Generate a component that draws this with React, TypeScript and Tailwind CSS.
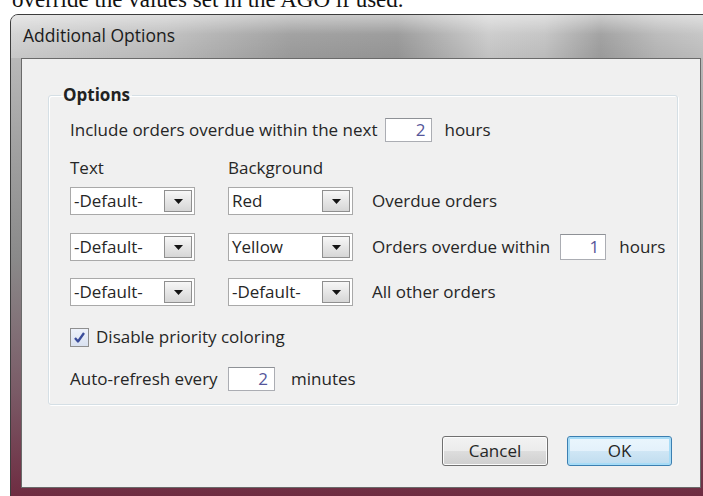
import React from "react";

function Combo({ value, width }: { value: string; width: string }) {
  return (
    <div className={`flex h-[28px] ${width} shrink-0 items-stretch border border-[#a9a9a9] bg-white`}>
      <span className="flex flex-1 items-center pl-[3px]">{value}</span>
      <span className="my-[2px] mr-[2px] flex w-[28px] items-center justify-center border border-[#8f8f8f] bg-[linear-gradient(to_bottom,#f7f7f7,#e6e6e6_50%,#d6d6d6)]">
        <svg width="9" height="5" viewBox="0 0 9 5">
          <path d="M0 0h9L4.5 5z" fill="#141414" />
        </svg>
      </span>
    </div>
  );
}

function NumField({ value, width, height }: { value: string; width: string; height: string }) {
  return (
    <div
      className={`flex ${width} ${height} shrink-0 items-center justify-end border border-[#abadb3] border-t-[#8e9196] bg-white pr-[6px] text-[#55569a]`}
    >
      {value}
    </div>
  );
}

function Checkbox() {
  return (
    <span className="flex h-[19px] w-[19px] shrink-0 items-center justify-center border border-[#8f8f8f] bg-[linear-gradient(to_bottom,#eef2fa,#d9e1f0)]">
      <svg width="13" height="13" viewBox="0 0 13 13">
        <path d="M2 7 L5 10.5 L11 2" fill="none" stroke="#3a4c9a" strokeWidth="2.3" strokeLinejoin="round" />
      </svg>
    </span>
  );
}

function DialogButton({ label, primary }: { label: string; primary?: boolean }) {
  return (
    <div
      className={
        primary
          ? "flex h-[30px] w-[105px] items-center justify-center rounded-[3px] border border-[#3c7fb1] bg-[linear-gradient(to_bottom,#eaf6fd,#e3f1fb_50%,#cfe6f5_51%,#bfdcef)] shadow-[inset_0_0_0_2px_#a7dcf7]"
          : "flex h-[30px] w-[106px] items-center justify-center rounded-[3px] border border-[#707070] bg-[linear-gradient(to_bottom,#f2f2f2,#ebebeb_50%,#dddddd_51%,#cfcfcf)] shadow-[inset_0_0_0_1px_#fcfcfc]"
      }
    >
      {label}
    </div>
  );
}

export default function App() {
  return (
    <div className="h-[496px] w-[703px] overflow-hidden bg-white font-['Open_Sans','Noto_Sans',sans-serif] text-[17px] text-[#262626]">
      {/* last line of the page text above the dialog */}
      <div className="h-[14px] overflow-hidden pl-[12px]">
        <p className="-mt-[12px] whitespace-nowrap font-['Liberation_Serif',serif] text-[23px] leading-none text-[#111]">
          override the values set in the AGO if used.
        </p>
      </div>

      {/* window frame */}
      <div className="ml-[10px] w-[704px] rounded-tl-[8px] border border-[#3d3d3d] bg-[linear-gradient(to_bottom,#c4c4c4_0%,#a4a4a4_25%,#8a8a8a_50%,#7a5a66_78%,#6e2a40_100%)] pb-[12px]">
        <div className="flex h-[43px] items-center rounded-tl-[7px] bg-[linear-gradient(to_bottom,rgba(255,255,255,0.45),rgba(255,255,255,0)_45%,rgba(0,0,0,0.06)),linear-gradient(to_right,#d4d4d4_0%,#c2c2c2_22%,#a2a2a2_40%,#9d9d9d_55%,#cdcdcd_68%,#c6c6c6_76%,#a3a3a3_84%,#bcbcbc_92%,#c9c9c9_100%)] pb-[2px] pl-[12px] text-[17.5px] text-[#1b1b1b]">
          Additional Options
        </div>

        {/* client area */}
        <div className="ml-[10px] h-[430px] w-[680px] border border-[#6a6a6a] bg-[#f0f0f0]">
          <fieldset className="ml-[26px] mt-[26px] w-[630px] min-w-0 whitespace-nowrap rounded-[3px] border border-[#d5dfe5] px-[21px] pb-[13px] pt-[13px] shadow-[inset_1px_1px_0_#ffffff,1px_1px_0_#ffffff]">
            <legend className="-ml-[9px] px-[2px] font-bold leading-[20px] text-[#222]">Options</legend>

            <div className="flex h-[24px] items-center">
              <span>Include orders overdue within the next</span>
              <span className="ml-[8px]">
                <NumField value="2" width="w-[47px]" height="h-[24px]" />
              </span>
              <span className="ml-[12px]">hours</span>
            </div>

            <div className="mt-[16px] flex h-[20px] items-center">
              <span className="w-[158px] shrink-0">Text</span>
              <span>Background</span>
            </div>

            <div className="mt-[9px] flex h-[28px] items-center gap-[33px]">
              <Combo value="-Default-" width="w-[125px]" />
              <div className="flex shrink-0 items-center gap-[19px]">
                <Combo value="Red" width="w-[125px]" />
                <span>Overdue orders</span>
              </div>
            </div>

            <div className="mt-[18px] flex h-[28px] items-center gap-[33px]">
              <Combo value="-Default-" width="w-[125px]" />
              <div className="flex shrink-0 items-center">
                <Combo value="Yellow" width="w-[125px]" />
                <span className="ml-[19px] shrink-0">Orders overdue within</span>
                <span className="ml-[10px] shrink-0">
                  <NumField value="1" width="w-[46px]" height="h-[26px]" />
                </span>
                <span className="ml-[13px] shrink-0">hours</span>
              </div>
            </div>

            <div className="mt-[17px] flex h-[28px] items-center gap-[33px]">
              <Combo value="-Default-" width="w-[125px]" />
              <div className="flex shrink-0 items-center gap-[19px]">
                <Combo value="-Default-" width="w-[125px]" />
                <span>All other orders</span>
              </div>
            </div>

            <div className="mt-[21px] flex h-[20px] items-center gap-[7px]">
              <Checkbox />
              <span>Disable priority coloring</span>
            </div>

            <div className="mt-[20px] flex h-[24px] items-center">
              <span className="w-[158px] shrink-0">Auto-refresh every</span>
              <NumField value="2" width="w-[47px]" height="h-[24px]" />
              <span className="ml-[16px]">minutes</span>
            </div>
          </fieldset>

          <div className="mt-[31px] flex justify-end gap-[19px] pr-[28px]">
            <DialogButton label="Cancel" />
            <DialogButton label="OK" primary />
          </div>
        </div>
      </div>
    </div>
  );
}
